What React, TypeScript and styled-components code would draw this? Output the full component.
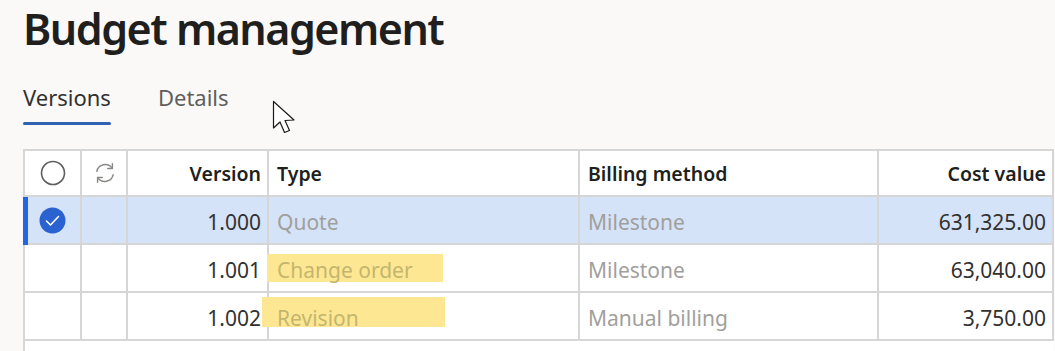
import React from "react";
import styled, { createGlobalStyle } from "styled-components";

const GlobalStyle = createGlobalStyle`
  body {
    margin: 0;
    background: #faf9f8;
    font-family: "Noto Sans", "Open Sans", sans-serif;
    color: #201f1e;
  }
`;

const Page = styled.div`
  position: relative;
  padding: 0 0 0 23px;
  height: 351px;
  overflow: hidden;
`;

const Title = styled.h1`
  margin: 0;
  font-size: 43px;
  font-weight: 600;
  line-height: 58px;
  letter-spacing: -1.5px;
  color: #201f1e;
`;

const Tabs = styled.div`
  display: flex;
  gap: 47px;
  margin-top: 24px;
`;

const Tab = styled.div<{ active?: boolean }>`
  position: relative;
  font-size: 22px;
  line-height: 30px;
  padding-bottom: 13px;
  color: ${(p) => (p.active ? "#323130" : "#605e5c")};
  &::after {
    content: "";
    display: ${(p) => (p.active ? "block" : "none")};
    position: absolute;
    left: 0;
    right: 0;
    bottom: 0;
    height: 3px;
    border-radius: 2px;
    background: #2f62b0;
  }
`;

const Grid = styled.div`
  margin-top: 24px;
  display: grid;
  grid-template-columns: 57px 46px 141px 311px 299px 175px;
  background: #ffffff;
  border-top: 2px solid #d6d6d6;
  border-left: 2px solid #d6d6d6;
  width: max-content;
`;

const Cell = styled.div<{
  align?: "left" | "right" | "center";
  head?: boolean;
  selected?: boolean;
  dim?: boolean;
}>`
  position: relative;
  display: flex;
  align-items: center;
  justify-content: ${(p) =>
    p.align === "right" ? "flex-end" : p.align === "center" ? "center" : "flex-start"};
  height: ${(p) => (p.head ? "46px" : "48px")};
  box-sizing: border-box;
  padding: ${(p) => (p.head ? "0 6px 0 8px" : "4px 6px 0 8px")};
  border-right: 2px solid #d6d6d6;
  border-bottom: 2px solid #d6d6d6;
  background: ${(p) => (p.selected ? "#d5e3f8" : "#ffffff")};
  font-size: ${(p) => (p.head ? "19.5px" : "21px")};
  font-weight: ${(p) => (p.head ? 600 : 400)};
  color: ${(p) => (p.head ? "#201f1e" : p.dim ? "#a19f9d" : "#323130")};
  white-space: nowrap;
`;

const FirstCell = styled(Cell)<{ accent?: boolean }>`
  padding: 0;
  justify-content: center;
  &::before {
    content: "";
    display: ${(p) => (p.accent ? "block" : "none")};
    position: absolute;
    left: -2px;
    top: 0;
    bottom: -2px;
    width: 5px;
    background: #2266e3;
  }
`;

const Filler = styled.div`
  grid-column: 1 / -1;
  height: 20px;
`;

/* marker stroke drawn over the cell, behind the text */
const Highlight = styled.span<{ shift: number; rise: number; wide: number; tall: number }>`
  position: relative;
  z-index: 0;
  color: #c4b66e;
  &::before {
    content: "";
    position: absolute;
    z-index: -1;
    left: -${(p) => p.shift}px;
    top: ${(p) => p.rise}px;
    width: ${(p) => p.wide}px;
    height: ${(p) => p.tall}px;
    background: #fee792;
  }
`;

const Cursor = styled.svg`
  position: absolute;
  left: 272px;
  top: 100px;
`;

const EmptyCircle = () => (
  <svg width="26" height="26" viewBox="0 0 26 26">
    <circle cx="13" cy="13" r="11.5" fill="none" stroke="#605e5c" strokeWidth="1.6" />
  </svg>
);

const CheckedCircle = () => (
  <svg width="27" height="27" viewBox="0 0 27 27">
    <circle cx="13.5" cy="13.5" r="13" fill="#2a62cf" />
    <path d="M7.5 14 L11.5 18 L19.5 9.5" fill="none" stroke="#fff" strokeWidth="1.6" strokeLinecap="round" strokeLinejoin="round" />
  </svg>
);

const RefreshIcon = () => (
  <svg width="24" height="24" viewBox="0 0 22 22" fill="none" stroke="#8a8886" strokeWidth="1.3" strokeLinecap="round" strokeLinejoin="round">
    <path d="M3.5 9.5 A7.8 7.8 0 0 1 17.5 6.5" />
    <path d="M17.8 2.5 V6.8 H13.5" />
    <path d="M18.5 12.5 A7.8 7.8 0 0 1 4.5 15.5" />
    <path d="M4.2 19.5 V15.2 H8.5" />
  </svg>
);

type Mark = { shift: number; rise: number; wide: number; tall: number };

type Row = {
  version: string;
  type: string;
  billing: string;
  cost: string;
  selected?: boolean;
  mark?: Mark;
};

const rows: Row[] = [
  { version: "1.000", type: "Quote", billing: "Milestone", cost: "631,325.00", selected: true },
  {
    version: "1.001",
    type: "Change order",
    billing: "Milestone",
    cost: "63,040.00",
    mark: { shift: 10, rise: -2, wide: 176, tall: 28 },
  },
  {
    version: "1.002",
    type: "Revision",
    billing: "Manual billing",
    cost: "3,750.00",
    mark: { shift: 15, rise: -7, wide: 183, tall: 30 },
  },
];

export default function App() {
  return (
    <Page>
      <GlobalStyle />
      <Title>Budget management</Title>
      <Tabs>
        <Tab active>Versions</Tab>
        <Tab>Details</Tab>
      </Tabs>
      <Grid>
        <FirstCell head>
          <EmptyCircle />
        </FirstCell>
        <Cell head align="center">
          <RefreshIcon />
        </Cell>
        <Cell head align="right">Version</Cell>
        <Cell head>Type</Cell>
        <Cell head>Billing method</Cell>
        <Cell head align="right">Cost value</Cell>
        {rows.map((r) => (
          <React.Fragment key={r.version}>
            <FirstCell selected={r.selected} accent={r.selected}>
              {r.selected && <CheckedCircle />}
            </FirstCell>
            <Cell selected={r.selected} />
            <Cell selected={r.selected} align="right">{r.version}</Cell>
            <Cell selected={r.selected} dim>
              {r.mark ? <Highlight {...r.mark}>{r.type}</Highlight> : r.type}
            </Cell>
            <Cell selected={r.selected} dim>{r.billing}</Cell>
            <Cell selected={r.selected} align="right">{r.cost}</Cell>
          </React.Fragment>
        ))}
        <Filler />
      </Grid>
      <Cursor width="30" height="40" viewBox="0 0 30 40">
        <path d="M1.5 1.5 L1.5 28 L8 22 L12.5 32.5 L17.5 30.5 L13 20.5 L22 20 Z" fill="#fff" stroke="#1b1a19" strokeWidth="1.2" strokeLinejoin="round" />
      </Cursor>
    </Page>
  );
}
